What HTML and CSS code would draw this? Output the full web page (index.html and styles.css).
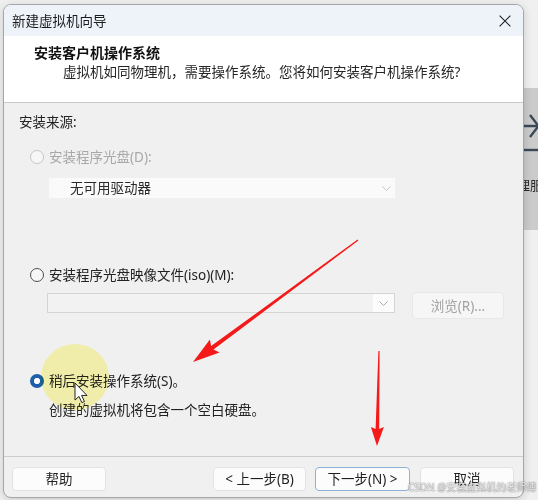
FILE: index.html
```html
<!DOCTYPE html>
<html lang="zh-CN">
<head>
<meta charset="utf-8">
<link rel="stylesheet" href="styles.css">
</head>
<body>
<div class="bgwin">
  <svg class="bgwin-icon" width="68" height="70" viewBox="0 0 68 70">
    <path d="M54 38 H67 M60 27 L68.5 38 L60 49" fill="none" stroke="#3c4858" stroke-width="2.4"/>
    <path d="M54 62 H68" stroke="#3c4858" stroke-width="2.4"/>
  </svg>
  <div class="bgwin-text">理服</div>
</div>

<div class="dialog">
  <div class="titlebar">
    <span class="title">新建虚拟机向导</span>
    <svg class="close" width="12" height="12" viewBox="0 0 12 12"><path d="M0.6 0.6 L11.4 11.4 M11.4 0.6 L0.6 11.4" stroke="#222" stroke-width="1.1"/></svg>
  </div>
  <div class="header">
    <div class="h-title">安装客户机操作系统</div>
    <div class="h-sub">虚拟机如同物理机，需要操作系统。您将如何安装客户机操作系统?</div>
  </div>
  <div class="content">
    <div class="label">安装来源:</div>
    <div class="radio-row disabled r1"><span class="radio"></span><span>安装程序光盘(D):</span></div>
    <div class="select sel1"><span>无可用驱动器</span><svg width="9" height="5" viewBox="0 0 9 5"><polyline points="0.5,0.5 4.5,4.5 8.5,0.5" fill="none" stroke="#c6c6c6" stroke-width="1"/></svg></div>
    <div class="radio-row r2"><span class="radio"></span><span>安装程序光盘映像文件(iso)(M):</span></div>
    <div class="iso-row">
      <div class="select sel2"><span class="sel-btn"><svg width="9" height="5" viewBox="0 0 9 5"><polyline points="0.5,0.5 4.5,4.5 8.5,0.5" fill="none" stroke="#a9a9a9" stroke-width="1"/></svg></span></div>
      <button class="btn browse">浏览(R)...</button>
    </div>
    <div class="radio-row r3"><span class="radio checked"></span><span>稍后安装操作系统(S)。</span></div>
    <div class="desc">创建的虚拟机将包含一个空白硬盘。</div>
  </div>
  <div class="footer">
    <button class="btn help">帮助</button>
    <div class="spacer"></div>
    <button class="btn back">&lt; 上一步(B)</button>
    <button class="btn next">下一步(N) &gt;</button>
    <button class="btn cancel">取消</button>
  </div>
</div>

<div class="highlight"></div>

<svg class="annot" width="538" height="500" viewBox="0 0 538 500">
  <polygon points="358.4,240.5 213.5,349.4 219.5,352.4 193,362 209.9,339.5 211.1,346.1 357.6,239.5" fill="#f51a1a"/>
  <polygon points="379.6,351 379.2,429 383.9,427.1 377,446 370.9,426.9 375.6,429 378.4,351" fill="#f51a1a"/>
  <path transform="translate(75,383) scale(1.1)" d="M0 0 V15.5 L3.6 12.2 L6.2 17.8 L8.6 16.8 L6 11.3 H10.9 Z" fill="#fff" stroke="#222" stroke-width="0.9" stroke-linejoin="round"/>
</svg>

<div class="watermark">CSDN @安装虚拟机的老师傅</div>
</body>
</html>
```

FILE: styles.css
```css
* { box-sizing: border-box; }
html, body { margin: 0; padding: 0; }
body {
  width: 538px;
  height: 500px;
  overflow: hidden;
  position: relative;
  padding: 4px 0 0 3px;
  background: #f0f0f0;
  font-family: "Noto Sans", "Noto Sans CJK SC", sans-serif;
  font-size: 13.5px;
  color: #222;
}

/* window behind the dialog */
.bgwin {
  position: absolute;
  left: 470px;
  top: 88px;
  width: 68px;
  height: 142px;
  background: #cbcbcb;
  padding-left: 47px;
}
.bgwin-icon { position: absolute; left: 0; top: 0; }
.bgwin-text {
  margin-top: 88px;
  line-height: 18px;
  font-size: 13px;
  color: #2a2a2a;
  white-space: nowrap;
}

.dialog {
  position: relative;
  z-index: 1;
  width: 521px;
  height: 494px;
  border: 1px solid #a6a6a6;
  border-radius: 8px;
  overflow: hidden;
  display: flex;
  flex-direction: column;
  background: #f0f0f0;
  box-shadow: 0 2px 8px rgba(0,0,0,0.16);
}

.titlebar {
  height: 31px;
  flex: none;
  background: #eef3fa;
  display: flex;
  align-items: center;
  justify-content: space-between;
  padding: 0 12px 0 8px;
  color: #1b1b1b;
  line-height: 18px;
}
.close { display: block; }

.header {
  height: 67px;
  flex: none;
  background: #fff;
  border-bottom: 1px solid #cacaca;
  padding: 8px 0 0 30px;
}
.h-title { font-weight: bold; line-height: 18px; color: #111; font-size: 14px; }
.h-sub { line-height: 18px; margin-top: 1px; padding-left: 29px; color: #252525; }

.content {
  flex: 1;
  padding: 10px 0 0 15px;
}
.label { line-height: 18px; }

.radio-row {
  display: flex;
  align-items: center;
  height: 18px;
  line-height: 18px;
  margin-left: 11px;
  gap: 5px;
}
.radio {
  width: 14px;
  height: 14px;
  border-radius: 50%;
  border: 1px solid #4f4f4f;
  background: #f6f6f6;
  flex: none;
}
.disabled { color: #a8a8a8; }
.disabled .radio { border-color: #c6c6c6; background: #f7f7f7; }
.radio.checked {
  border: none;
  background: radial-gradient(circle at center, #ffffff 0 2.8px, #1d5fa9 3.4px);
}
.r1 { margin-top: 17px; }
.r2 { margin-top: 68px; }
.r3 { margin-top: 53px; }

.select { display: flex; align-items: center; }
.sel1 {
  margin: 12px 0 0 30px;
  width: 346px;
  height: 20px;
  background: #fafafa;
  justify-content: space-between;
  padding: 0 4px 0 21px;
  color: #2a2a2a;
  line-height: 18px;
}
.sel1 svg, .sel-btn svg { display: block; }

.iso-row {
  display: flex;
  align-items: flex-start;
  margin: 8px 0 0 28px;
}
.sel2 {
  margin-top: 1px;
  width: 348px;
  height: 20px;
  border: 1px solid #d4d4d4;
  background: #f2f2f2;
  justify-content: flex-end;
}
.sel-btn {
  width: 21px;
  height: 18px;
  background: #fcfcfc;
  display: flex;
  align-items: center;
  justify-content: center;
}

.btn {
  height: 24px;
  border: 1px solid #e2e2e2;
  background: #fcfcfc;
  border-radius: 4px;
  font: inherit;
  color: #1f1f1f;
  padding: 0;
  line-height: 22px;
  flex: none;
}
.browse {
  margin-left: 17px;
  width: 92px;
  height: 27px;
  background: #f6f6f6;
  border-color: #e8e8e8;
  color: #a3a3a3;
}

.desc { margin: 11px 0 0 30px; line-height: 18px; }

.footer {
  height: 41px;
  flex: none;
  border-top: 1px solid #cdcdcd;
  display: flex;
  align-items: flex-start;
  padding: 10px 9px 0 8px;
}
.spacer { flex: 1; }
.help { width: 94px; }
.back { width: 93px; }
.next { width: 95px; margin-left: 9px; border-color: #8eb1d5; }
.cancel { width: 94px; margin-left: 10px; }

/* annotations laid over the screenshot */
.highlight {
  position: absolute;
  z-index: 2;
  left: 41px;
  top: 344px;
  width: 68px;
  height: 66px;
  border-radius: 50%;
  background: radial-gradient(circle at center, #fffbb4 0 78%, rgba(255,251,180,0) 100%);
  mix-blend-mode: multiply;
  pointer-events: none;
}
.annot {
  position: absolute;
  z-index: 3;
  left: 0;
  top: 0;
  pointer-events: none;
}
.watermark {
  position: absolute;
  z-index: 4;
  left: 408px;
  top: 481px;
  font-size: 10px;
  line-height: 13px;
  white-space: nowrap;
  color: rgba(255,255,255,0.9);
  text-shadow: 0 0 1px rgba(0,0,0,0.7), 0 0 2px rgba(0,0,0,0.25);
}
```
